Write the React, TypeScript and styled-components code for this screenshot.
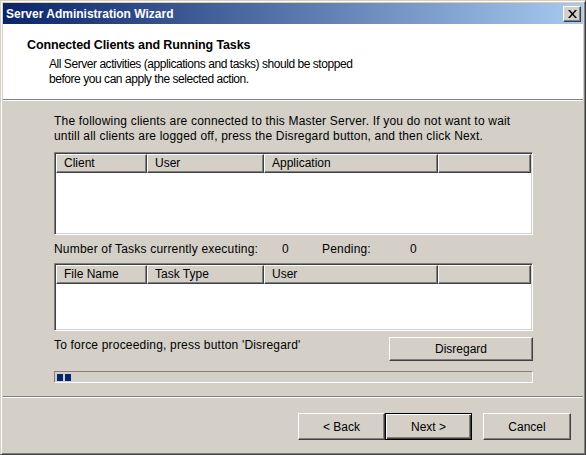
import React, { FC } from 'react';
import styled, { createGlobalStyle } from 'styled-components';

const GlobalStyle = createGlobalStyle`
  html, body {
    margin: 0;
    padding: 0;
    background: #d4d0c8;
  }
  * {
    box-sizing: border-box;
  }
`;

const Window = styled.div`
  width: 586px;
  height: 455px;
  display: flex;
  flex-direction: column;
  background: #d4d0c8;
  border: 1px solid;
  border-color: #d4d0c8 #404040 #404040 #d4d0c8;
  box-shadow: inset 1px 1px 0 #ffffff, inset -1px -1px 0 #808080;
  padding: 2px;
  font-family: 'Liberation Sans', Arial, sans-serif;
  font-size: 12px;
  color: #000;
`;

const TitleBar = styled.div`
  height: 21px;
  flex: none;
  display: flex;
  align-items: center;
  justify-content: space-between;
  padding: 0 2px 0 3px;
  background: linear-gradient(to right, #0a246a, #a6caf0);
`;

const TitleText = styled.span`
  color: #fff;
  font-weight: bold;
  font-size: 12px;
`;

const CloseButton = styled.button`
  width: 18px;
  height: 16px;
  padding: 0;
  display: flex;
  align-items: center;
  justify-content: center;
  background: #d4d0c8;
  border: 1px solid;
  border-color: #ffffff #404040 #404040 #ffffff;
  box-shadow: inset -1px -1px 0 #808080;
`;

const Header = styled.div`
  height: 75px;
  flex: none;
  background: #fff;
  padding: 13px 0 0 24px;
`;

const HeaderTitle = styled.div`
  font-weight: bold;
  font-size: 12.5px;
  letter-spacing: -0.12px;
  line-height: 16px;
`;

const HeaderText = styled.div`
  padding-left: 22px;
  line-height: 15px;
  margin-top: 4px;
  letter-spacing: -0.45px;
`;

const Separator = styled.div`
  height: 2px;
  flex: none;
  border-top: 1px solid #808080;
  border-bottom: 1px solid #ffffff;
`;

const Body = styled.div`
  height: 295px;
  flex: none;
  padding: 13px 0 0 51px;
  display: flex;
  flex-direction: column;
  letter-spacing: 0.19px;
`;

const Paragraph = styled.div`
  line-height: 15px;
  width: 482px;
`;

const ListView = styled.div<{ $height: number; $top: number }>`
  width: 479px;
  height: ${p => p.$height}px;
  margin-top: ${p => p.$top}px;
  background: #fff;
  border: 1px solid;
  border-color: #808080 #ffffff #ffffff #808080;
  box-shadow: inset 1px 1px 0 #404040, inset -1px -1px 0 #d4d0c8;
  padding: 1px;
  display: flex;
  flex-direction: column;
  letter-spacing: 0;
`;

const HeaderRow = styled.div`
  display: flex;
  height: 19px;
  flex: none;
`;

const ColumnHeader = styled.div<{ $width?: number }>`
  ${p => (p.$width ? `width: ${p.$width}px; flex: none;` : 'flex: 1;')}
  background: #d4d0c8;
  border: 1px solid;
  border-color: #ffffff #404040 #404040 #ffffff;
  box-shadow: inset -1px -1px 0 #808080;
  padding: 1px 0 0 7px;
  line-height: 15px;
  white-space: nowrap;
  overflow: hidden;
`;

const TasksRow = styled.div`
  display: flex;
  line-height: 15px;
  margin-top: 7px;
`;

const Cell = styled.span<{ $width: number }>`
  width: ${p => p.$width}px;
  flex: none;
`;

const ForceRow = styled.div`
  display: flex;
  align-items: flex-start;
  justify-content: space-between;
  width: 479px;
  margin-top: 6px;
  line-height: 15px;
`;

const ForceText = styled.span`
  padding-top: 1px;
`;

const Button = styled.button<{ $width: number; $height: number; $default?: boolean }>`
  width: ${p => p.$width}px;
  height: ${p => p.$height}px;
  padding: 0;
  font-family: inherit;
  font-size: 12px;
  letter-spacing: 0;
  color: #000;
  background: #d4d0c8;
  border: 1px solid;
  border-color: ${p => (p.$default ? '#000' : '#ffffff #404040 #404040 #ffffff')};
  box-shadow: ${p =>
    p.$default
      ? 'inset 1px 1px 0 #ffffff, inset -1px -1px 0 #404040, inset -2px -2px 0 #808080'
      : 'inset -1px -1px 0 #808080'};
`;

const Progress = styled.div`
  width: 479px;
  height: 12px;
  margin-top: 10px;
  border: 1px solid;
  border-color: #808080 #ffffff #ffffff #808080;
  display: flex;
  gap: 2px;
  padding: 2px 0 0 2px;
`;

const ProgressBlock = styled.div`
  width: 6px;
  height: 7px;
  background: #0a246a;
`;

const Footer = styled.div`
  flex: 1;
  display: flex;
  justify-content: flex-end;
  align-items: flex-start;
  padding: 15px 12px 0 0;
`;

const NavGroup = styled.div`
  display: flex;
  margin-right: 11px;
`;

const App: FC = () => {
  return (
    <>
      <GlobalStyle />
      <Window>
        <TitleBar>
          <TitleText>Server Administration Wizard</TitleText>
          <CloseButton>
            <svg width="9" height="8" viewBox="0 0 9 8">
              <path d="M0 0h2l2.5 3 2.5-3h2L5.5 4 9 8H7L4.5 5 2 8H0l3.5-4z" fill="#000" />
            </svg>
          </CloseButton>
        </TitleBar>
        <Header>
          <HeaderTitle>Connected Clients and Running Tasks</HeaderTitle>
          <HeaderText>
            All Server activities (applications and tasks) should be stopped
            <br />
            before you can apply the selected action.
          </HeaderText>
        </Header>
        <Separator />
        <Body>
          <Paragraph>
            The following clients are connected to this Master Server. If you do not want to wait
            <br />
            untill all clients are logged off, press the Disregard button, and then click Next.
          </Paragraph>
          <ListView $height={83} $top={8}>
            <HeaderRow>
              <ColumnHeader $width={91}>Client</ColumnHeader>
              <ColumnHeader $width={117}>User</ColumnHeader>
              <ColumnHeader $width={174}>Application</ColumnHeader>
              <ColumnHeader />
            </HeaderRow>
          </ListView>
          <TasksRow>
            <Cell $width={228}>Number of Tasks currently executing:</Cell>
            <Cell $width={40}>0</Cell>
            <Cell $width={88}>Pending:</Cell>
            <Cell $width={20}>0</Cell>
          </TasksRow>
          <ListView $height={68} $top={6}>
            <HeaderRow>
              <ColumnHeader $width={91}>File Name</ColumnHeader>
              <ColumnHeader $width={117}>Task Type</ColumnHeader>
              <ColumnHeader $width={174}>User</ColumnHeader>
              <ColumnHeader />
            </HeaderRow>
          </ListView>
          <ForceRow>
            <ForceText>To force proceeding, press button 'Disregard'</ForceText>
            <Button $width={144} $height={24}>Disregard</Button>
          </ForceRow>
          <Progress>
            <ProgressBlock />
            <ProgressBlock />
          </Progress>
        </Body>
        <Separator />
        <Footer>
          <NavGroup>
            <Button $width={87} $height={27}>&lt; Back</Button>
            <Button $width={87} $height={27} $default>Next &gt;</Button>
          </NavGroup>
          <Button $width={88} $height={27}>Cancel</Button>
        </Footer>
      </Window>
    </>
  );
};

export default App;
